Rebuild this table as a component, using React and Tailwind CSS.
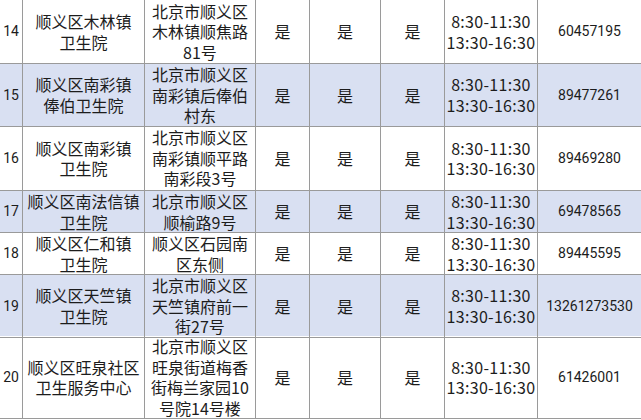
const COLS = 'grid-cols-[23px_122px_111px_54px_71px_64px_93px_103px]';

const rows = [
  { no: '14', name: ['顺义区木林镇', '卫生院'], addr: ['北京市顺义区', '木林镇顺焦路', '81号'], tel: '60457195', h: 'h-[64px]' },
  { no: '15', name: ['顺义区南彩镇', '俸伯卫生院'], addr: ['北京市顺义区', '南彩镇后俸伯', '村东'], tel: '89477261', h: 'h-[62px]' },
  { no: '16', name: ['顺义区南彩镇', '卫生院'], addr: ['北京市顺义区', '南彩镇顺平路', '南彩段3号'], tel: '89469280', h: 'h-[65px]' },
  { no: '17', name: ['顺义区南法信镇', '卫生院'], addr: ['北京市顺义区', '顺榆路9号'], tel: '69478565', h: 'h-[42px]' },
  { no: '18', name: ['顺义区仁和镇', '卫生院'], addr: ['顺义区石园南', '区东侧'], tel: '89445595', h: 'h-[42px]' },
  { no: '19', name: ['顺义区天竺镇', '卫生院'], addr: ['北京市顺义区', '天竺镇府前一', '街27号'], tel: '13261273530', h: 'h-[61px]' },
  { no: '20', name: ['顺义区旺泉社区', '卫生服务中心'], addr: ['北京市顺义区', '旺泉街道梅香', '街梅兰家园10', '号院14号楼'], tel: '61426001', h: 'h-[83px]' },
];

function Cell({ children, last, className = '' }) {
  return (
    <div
      className={`flex flex-col items-center justify-center text-center border-b border-[#9a9a9a] ${
        last ? '' : 'border-r'
      } ${className}`}
    >
      {children}
    </div>
  );
}

function Lines({ items }) {
  return items.map((t) => (
    <span key={t} className="block whitespace-nowrap">
      {t}
    </span>
  ));
}

export default function App() {
  return (
    <div
      className="w-[641px] h-[420px] bg-white text-[#1c1c1c] text-[16px] leading-[20.5px] overflow-hidden"
      style={{ fontFamily: '"Noto Sans CJK SC", "Noto Sans", sans-serif' }}
    >
      {rows.map((r, i) => (
        <div
          key={r.no}
          className={`grid ${COLS} ${r.h} ${i % 2 === 1 ? 'bg-[#d9e0f2]' : 'bg-white'}`}
        >
          <Cell className="text-[14px] font-[Roboto]">{r.no}</Cell>
          <Cell>
            <Lines items={r.name} />
          </Cell>
          <Cell>
            <Lines items={r.addr} />
          </Cell>
          <Cell>是</Cell>
          <Cell>是</Cell>
          <Cell>是</Cell>
          <Cell className="tracking-[0.3px]">
            <span className="block whitespace-nowrap">8:30-11:30</span>
            <span className="block whitespace-nowrap">13:30-16:30</span>
          </Cell>
          <Cell last className="text-[14px] font-[Roboto]">
            {r.tel}
          </Cell>
        </div>
      ))}
    </div>
  );
}
